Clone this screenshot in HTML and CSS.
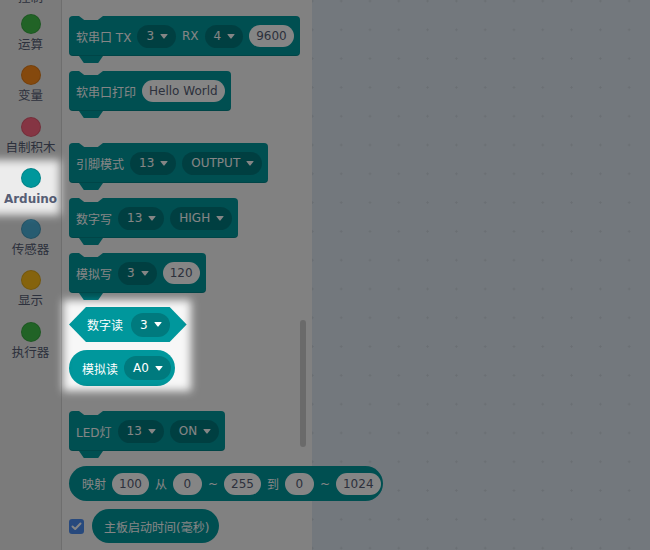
FILE: index.html
```html
<!DOCTYPE html>
<html lang="zh">
<head>
<meta charset="utf-8">
<title>Arduino blocks</title>
<link rel="stylesheet" href="styles.css">
</head>
<body>
<div class="app">
  <aside class="cats">
    <div class="cat-list">
      <div class="cat-label cat-cut">控制</div>
      <div class="cat"><span class="dot dot-op"></span><span class="cat-label">运算</span></div>
      <div class="cat"><span class="dot dot-var"></span><span class="cat-label">变量</span></div>
      <div class="cat"><span class="dot dot-my"></span><span class="cat-label">自制积木</span></div>
      <div class="cat cat-active"><span class="dot dot-ard"></span><span class="cat-label">Arduino</span></div>
      <div class="cat"><span class="dot dot-sen"></span><span class="cat-label">传感器</span></div>
      <div class="cat"><span class="dot dot-disp"></span><span class="cat-label">显示</span></div>
      <div class="cat"><span class="dot dot-act"></span><span class="cat-label">执行器</span></div>
    </div>
  </aside>

  <section class="flyout">
    <div class="blocks">
      <div class="stmt">
        <span>软串口 TX</span>
        <span class="dd">3<svg class="arrow" width="8" height="5" viewBox="0 0 8 5"><path d="M1 0H7Q8 0 7.4 0.8L4.6 4.3Q4 5 3.4 4.3L0.6 0.8Q0 0 1 0Z"/></svg></span>
        <span>RX</span>
        <span class="dd">4<svg class="arrow" width="8" height="5" viewBox="0 0 8 5"><path d="M1 0H7Q8 0 7.4 0.8L4.6 4.3Q4 5 3.4 4.3L0.6 0.8Q0 0 1 0Z"/></svg></span>
        <span class="inp">9600</span>
      </div>
      <div class="stmt m15">
        <span>软串口打印</span>
        <span class="inp">Hello World</span>
      </div>
      <div class="stmt m32">
        <span>引脚模式</span>
        <span class="dd">13<svg class="arrow" width="8" height="5" viewBox="0 0 8 5"><path d="M1 0H7Q8 0 7.4 0.8L4.6 4.3Q4 5 3.4 4.3L0.6 0.8Q0 0 1 0Z"/></svg></span>
        <span class="dd">OUTPUT<svg class="arrow" width="8" height="5" viewBox="0 0 8 5"><path d="M1 0H7Q8 0 7.4 0.8L4.6 4.3Q4 5 3.4 4.3L0.6 0.8Q0 0 1 0Z"/></svg></span>
      </div>
      <div class="stmt m15">
        <span>数字写</span>
        <span class="dd">13<svg class="arrow" width="8" height="5" viewBox="0 0 8 5"><path d="M1 0H7Q8 0 7.4 0.8L4.6 4.3Q4 5 3.4 4.3L0.6 0.8Q0 0 1 0Z"/></svg></span>
        <span class="dd">HIGH<svg class="arrow" width="8" height="5" viewBox="0 0 8 5"><path d="M1 0H7Q8 0 7.4 0.8L4.6 4.3Q4 5 3.4 4.3L0.6 0.8Q0 0 1 0Z"/></svg></span>
      </div>
      <div class="stmt m15">
        <span>模拟写</span>
        <span class="dd">3<svg class="arrow" width="8" height="5" viewBox="0 0 8 5"><path d="M1 0H7Q8 0 7.4 0.8L4.6 4.3Q4 5 3.4 4.3L0.6 0.8Q0 0 1 0Z"/></svg></span>
        <span class="inp">120</span>
      </div>
      <div class="bool m14">
        <span>数字读</span>
        <span class="dd dd-tall">3<svg class="arrow" width="8" height="5" viewBox="0 0 8 5"><path d="M1 0H7Q8 0 7.4 0.8L4.6 4.3Q4 5 3.4 4.3L0.6 0.8Q0 0 1 0Z"/></svg></span>
      </div>
      <div class="rep rep-dd m8">
        <span>模拟读</span>
        <span class="dd dd-tall">A0<svg class="arrow" width="8" height="5" viewBox="0 0 8 5"><path d="M1 0H7Q8 0 7.4 0.8L4.6 4.3Q4 5 3.4 4.3L0.6 0.8Q0 0 1 0Z"/></svg></span>
      </div>
      <div class="stmt m25">
        <span>LED灯</span>
        <span class="dd">13<svg class="arrow" width="8" height="5" viewBox="0 0 8 5"><path d="M1 0H7Q8 0 7.4 0.8L4.6 4.3Q4 5 3.4 4.3L0.6 0.8Q0 0 1 0Z"/></svg></span>
        <span class="dd">ON<svg class="arrow" width="8" height="5" viewBox="0 0 8 5"><path d="M1 0H7Q8 0 7.4 0.8L4.6 4.3Q4 5 3.4 4.3L0.6 0.8Q0 0 1 0Z"/></svg></span>
      </div>
      <div class="rep rep-map m15">
        <span>映射</span>
        <span class="inp">100</span>
        <span>从</span>
        <span class="inp">0</span>
        <span>~</span>
        <span class="inp">255</span>
        <span>到</span>
        <span class="inp">0</span>
        <span>~</span>
        <span class="inp">1024</span>
      </div>
      <div class="check-row m8">
        <span class="checkbox"><svg width="11" height="9" viewBox="0 0 11 9"><path d="M1.5 4.5L4.2 7L9.5 1.5" fill="none" stroke="#fff" stroke-width="2" stroke-linecap="round" stroke-linejoin="round"/></svg></span>
        <div class="rep rep-text"><span>主板启动时间(毫秒)</span></div>
      </div>
    </div>
    <div class="scrollbar"></div>
  </section>

  <main class="workspace"></main>

  <svg class="overlay" width="650" height="550" viewBox="0 0 650 550">
    <defs>
      <filter id="soft" x="-50%" y="-50%" width="200%" height="200%">
        <feGaussianBlur stdDeviation="4"/>
      </filter>
      <mask id="holes" maskUnits="userSpaceOnUse" x="0" y="0" width="650" height="550">
        <rect x="0" y="0" width="650" height="550" fill="#fff"/>
        <g filter="url(#soft)">
          <rect x="-20" y="160" width="80" height="55" fill="#000"/>
          <rect x="63" y="300" width="128" height="91" fill="#000"/>
        </g>
      </mask>
    </defs>
    <rect x="0" y="0" width="650" height="550" fill="#000" fill-opacity="0.48" mask="url(#holes)"/>
  </svg>
</div>
</body>
</html>
```

FILE: styles.css
```css
* { box-sizing: border-box; }

html, body {
  margin: 0;
  padding: 0;
  width: 650px;
  height: 550px;
  overflow: hidden;
}

body {
  font-family: "DejaVu Sans", "Noto Sans CJK SC", sans-serif;
  font-size: 12px;
}

.app {
  position: relative;
  display: flex;
  width: 650px;
  height: 550px;
  overflow: hidden;
}

/* ---------- categories ---------- */
.cats {
  flex: 0 0 62px;
  min-width: 0;
  background: #ececec;
  border-right: 1px solid #d4d4d4;
  overflow: hidden;
}

.cat-list {
  display: flex;
  flex-direction: column;
  align-items: center;
}

.cat-label {
  display: block;
  font-size: 12.5px;
  line-height: 16px;
  color: #575e75;
  white-space: nowrap;
}

.cat-cut {
  margin-top: -10px;
}

.cat {
  display: flex;
  flex-direction: column;
  align-items: center;
  width: 100%;
  height: 51.3px;
  padding-top: 8px;
  gap: 3px;
}

.cat-active .cat-label {
  font-size: 12px;
  font-weight: bold;
}

.dot {
  width: 20px;
  height: 20px;
  border-radius: 50%;
  border: 1px solid rgba(0, 0, 0, 0.12);
}

.dot-op   { background: #40bf4a; }
.dot-var  { background: #ff8c1a; }
.dot-my   { background: #ff6680; }
.dot-ard  { background: #00979c; }
.dot-sen  { background: #4cb0d8; }
.dot-disp { background: #ffbf1a; }
.dot-act  { background: #40bf4a; }

/* ---------- flyout ---------- */
.flyout {
  position: relative;
  z-index: 1;
  flex: 0 0 250px;
  width: 250px;
  min-width: 0;
  background: #f7f7f7;
}

.blocks {
  display: flex;
  flex-direction: column;
  align-items: flex-start;
  width: 250px;
  padding: 16px 0 0 7px;
}

.m8  { margin-top: 8px; }
.m14 { margin-top: 14px; }
.m15 { margin-top: 15px; }
.m25 { margin-top: 25px; }
.m32 { margin-top: 32px; }

.stmt, .bool, .rep {
  display: flex;
  flex: none;
  align-items: center;
  gap: 6px;
  color: #fff;
  background: #00979c;
  white-space: nowrap;
}

.stmt {
  position: relative;
  height: 40px;
  padding: 0 6px 0 7px;
  border-radius: 4px;
  box-shadow: inset 0 -1px 0 rgba(0, 0, 0, 0.12);
}

.stmt::before {
  content: "";
  position: absolute;
  top: 0;
  left: 10px;
  width: 24px;
  height: 4px;
  background: #f7f7f7;
  clip-path: polygon(0 0, 100% 0, 78% 100%, 22% 100%);
}

.stmt::after {
  content: "";
  position: absolute;
  top: 100%;
  left: 10px;
  width: 24px;
  height: 7px;
  background: #00979c;
  border-radius: 0 0 3px 3px;
  clip-path: polygon(0 0, 100% 0, 80% 100%, 20% 100%);
}

.bool {
  height: 35px;
  padding: 0 17px 0 18px;
  gap: 8px;
  clip-path: polygon(17px 0, calc(100% - 17px) 0, 100% 50%, calc(100% - 17px) 100%, 17px 100%, 0 50%);
}

.rep {
  border-radius: 18px;
}

.rep-dd {
  height: 36px;
  padding: 0 4px 0 13px;
}

.rep-map {
  height: 35px;
  padding: 0 2px 0 13px;
}

.rep-text {
  height: 34px;
  padding: 0 10px 0 12px;
}

.dd {
  display: flex;
  align-items: center;
  gap: 6px;
  height: 23px;
  padding: 0 8px 0 9px;
  border-radius: 12px;
  background: #007a7e;
  color: #fff;
}

.dd-tall {
  height: 24px;
}

.arrow path {
  fill: #fff;
}

.inp {
  display: flex;
  align-items: center;
  justify-content: center;
  min-width: 29px;
  height: 22px;
  padding: 0 7px;
  border-radius: 11px;
  background: #fff;
  color: #575e75;
}

.check-row {
  display: flex;
  align-items: center;
  gap: 8px;
}

.checkbox {
  display: flex;
  align-items: center;
  justify-content: center;
  width: 15px;
  height: 15px;
  border-radius: 3px;
  background: #4c8cf0;
}

.scrollbar {
  position: absolute;
  top: 320px;
  right: 6px;
  width: 6px;
  height: 127px;
  border-radius: 3px;
  background: #cccccc;
}

/* ---------- workspace ---------- */
.workspace {
  flex: 1 1 auto;
  min-width: 0;
  background-color: #dde7f0;
  background-image: radial-gradient(circle, #cbd3dc 0.9px, transparent 1.4px);
  background-size: 28.8px 28.8px;
  background-position: -14px -13.4px;
}

/* ---------- tutorial overlay ---------- */
.overlay {
  position: absolute;
  left: 0;
  top: 0;
  z-index: 5;
  pointer-events: none;
}
```
